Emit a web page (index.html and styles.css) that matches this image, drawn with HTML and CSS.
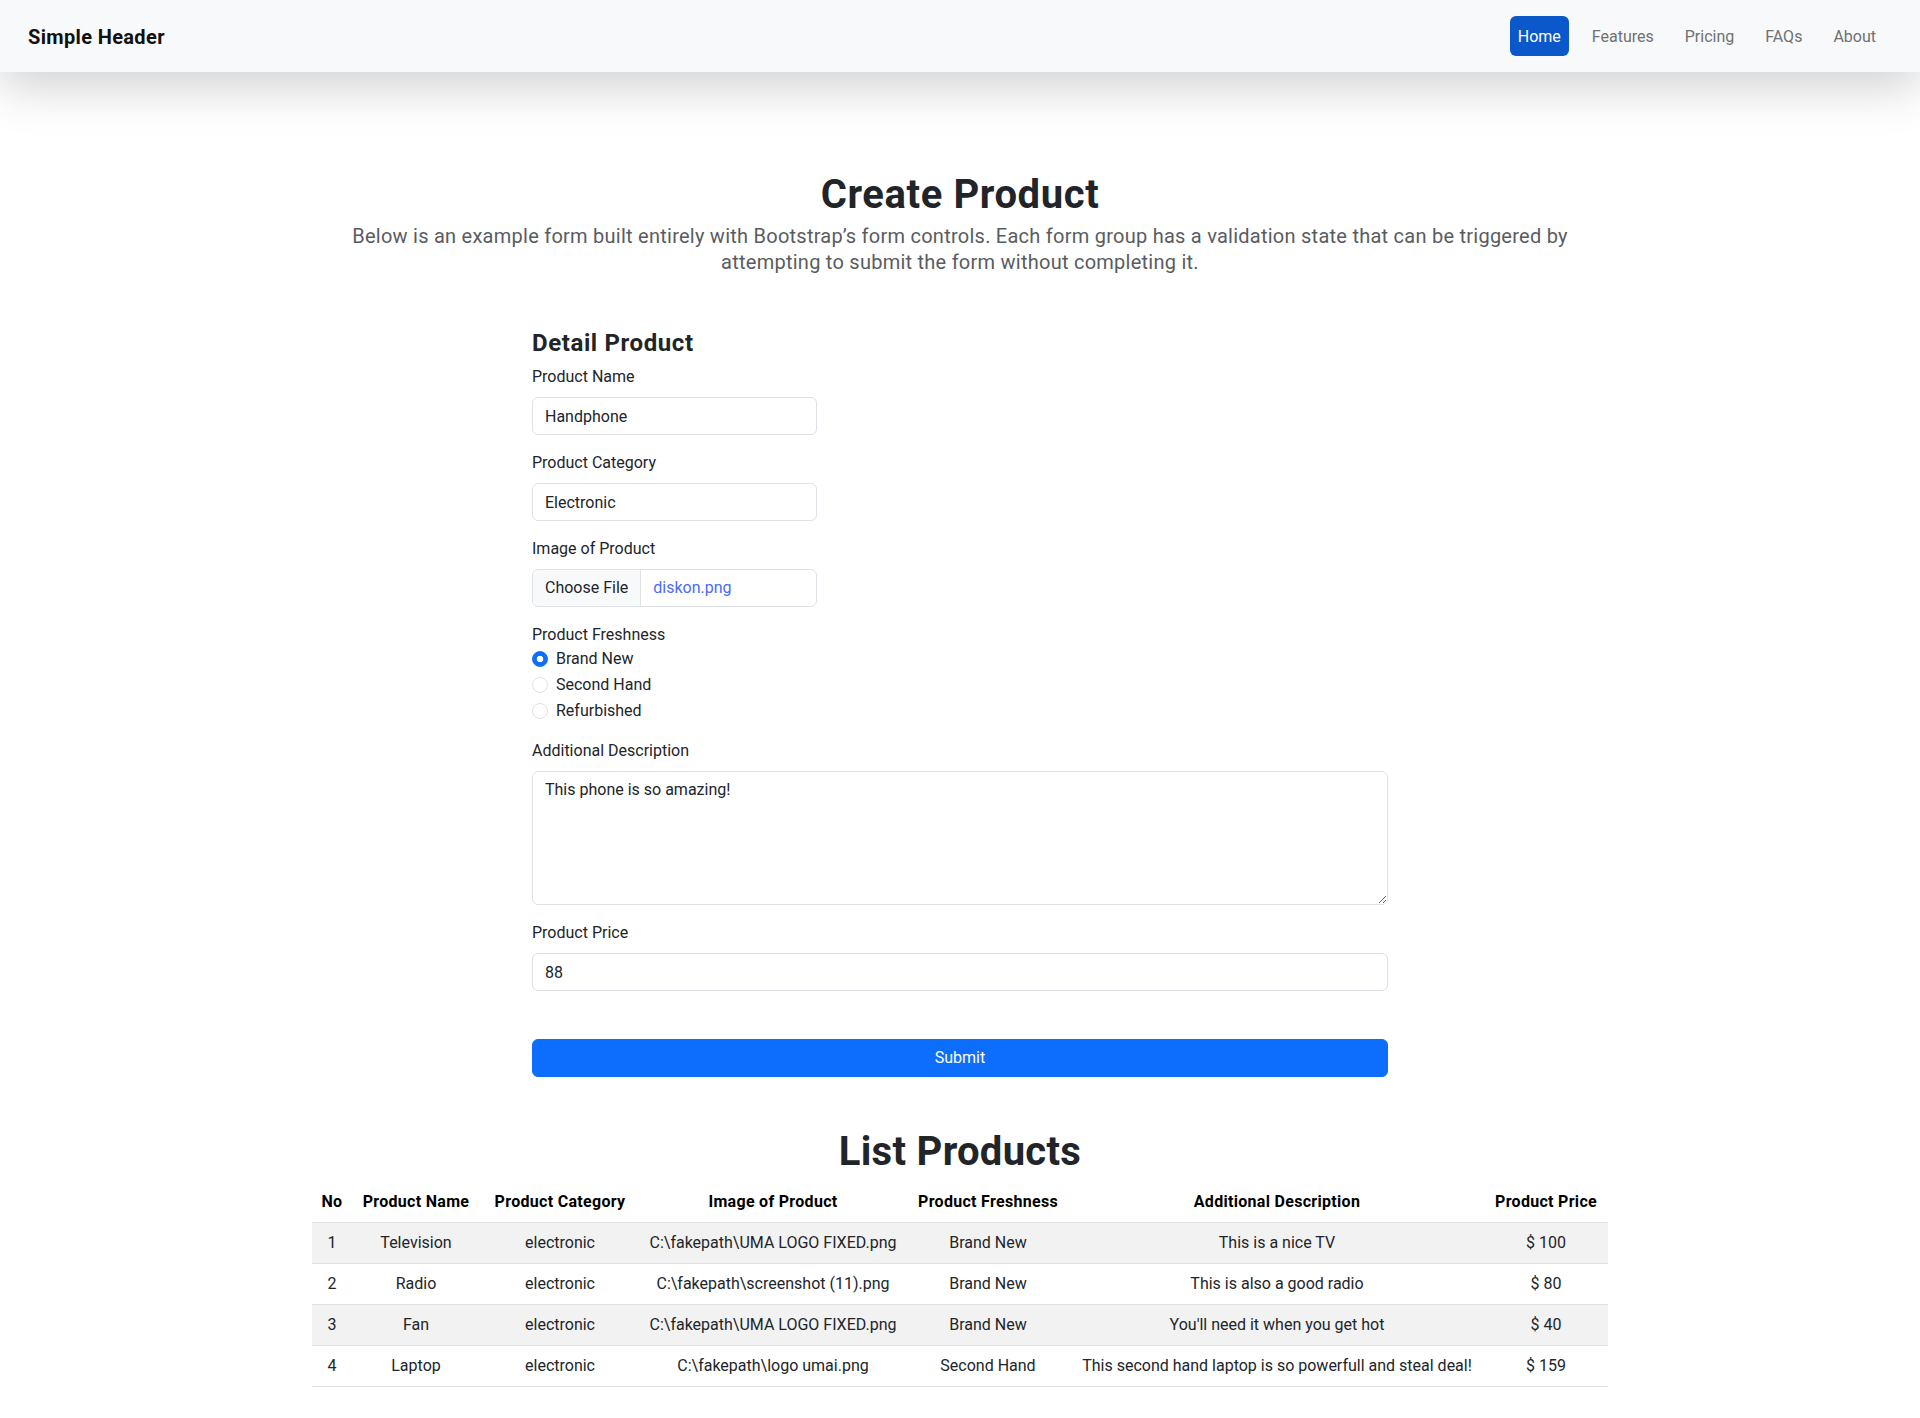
FILE: index.html
```html
<!DOCTYPE html>
<html lang="en">
<head>
<meta charset="utf-8">
<title>Create Product</title>
<link rel="stylesheet" href="styles.css">
</head>
<body>
<header class="site-header">
  <a class="brand" href="#">Simple Header</a>
  <nav class="nav">
    <a class="nav-link active" href="#">Home</a>
    <a class="nav-link" href="#">Features</a>
    <a class="nav-link" href="#">Pricing</a>
    <a class="nav-link" href="#">FAQs</a>
    <a class="nav-link" href="#">About</a>
  </nav>
</header>

<main class="container">
  <section class="hero">
    <h1 class="title">Create Product</h1>
    <p class="lead">Below is an example form built entirely with Bootstrap’s form controls. Each form group has a validation state that can be triggered by attempting to submit the form without completing it.</p>
  </section>

  <form class="product-form">
    <h4 class="form-title">Detail Product</h4>

    <div class="group">
      <label class="form-label">Product Name</label>
      <input class="form-control short" type="text" value="Handphone">
    </div>

    <div class="group">
      <label class="form-label">Product Category</label>
      <input class="form-control short" type="text" value="Electronic">
    </div>

    <div class="group">
      <label class="form-label">Image of Product</label>
      <div class="file-control short">
        <span class="file-btn">Choose File</span>
        <span class="file-name">diskon.png</span>
      </div>
    </div>

    <div class="group">
      <label class="plain-label">Product Freshness</label>
      <div class="form-check">
        <input class="radio" type="radio" name="fresh" checked>
        <span>Brand New</span>
      </div>
      <div class="form-check">
        <input class="radio" type="radio" name="fresh">
        <span>Second Hand</span>
      </div>
      <div class="form-check">
        <input class="radio" type="radio" name="fresh">
        <span>Refurbished</span>
      </div>
    </div>

    <div class="group">
      <label class="form-label">Additional Description</label>
      <textarea class="form-control textarea">This phone is so amazing!</textarea>
    </div>

    <div class="group">
      <label class="form-label">Product Price</label>
      <input class="form-control" type="text" value="88">
    </div>

    <button class="btn-submit" type="button">Submit</button>
  </form>

  <h1 class="title list-title">List Products</h1>
  <table class="table">
    <colgroup>
      <col style="width:40px">
      <col style="width:128px">
      <col style="width:160px">
      <col style="width:266px">
      <col style="width:164px">
      <col style="width:414px">
      <col style="width:124px">
    </colgroup>
    <thead>
      <tr>
        <th>No</th>
        <th>Product Name</th>
        <th>Product Category</th>
        <th>Image of Product</th>
        <th>Product Freshness</th>
        <th>Additional Description</th>
        <th>Product Price</th>
      </tr>
    </thead>
    <tbody>
      <tr class="striped">
        <td>1</td><td>Television</td><td>electronic</td><td>C:\fakepath\UMA LOGO FIXED.png</td><td>Brand New</td><td>This is a nice TV</td><td>$ 100</td>
      </tr>
      <tr>
        <td>2</td><td>Radio</td><td>electronic</td><td>C:\fakepath\screenshot (11).png</td><td>Brand New</td><td>This is also a good radio</td><td>$ 80</td>
      </tr>
      <tr class="striped">
        <td>3</td><td>Fan</td><td>electronic</td><td>C:\fakepath\UMA LOGO FIXED.png</td><td>Brand New</td><td>You'll need it when you get hot</td><td>$ 40</td>
      </tr>
      <tr>
        <td>4</td><td>Laptop</td><td>electronic</td><td>C:\fakepath\logo umai.png</td><td>Second Hand</td><td>This second hand laptop is so powerfull and steal deal!</td><td>$ 159</td>
      </tr>
    </tbody>
  </table>
</main>
</body>
</html>
```

FILE: styles.css
```css
* { box-sizing: border-box; }

html, body {
  margin: 0;
  background: #fff;
}

body {
  font-family: Roboto, "Segoe UI", "Noto Sans", Arial, sans-serif;
  font-size: 16px;
  line-height: 1.5;
  color: #212529;
}

/* Header */
.site-header {
  position: relative;
  z-index: 2;
  height: 72px;
  background: #f8f9fa;
  box-shadow: 0 16px 48px rgba(0, 0, 0, 0.175);
  display: flex;
  align-items: center;
  justify-content: space-between;
  padding: 0 36px 0 28px;
}

.brand {
  font-size: 20px;
  font-weight: 700;
  letter-spacing: 0.35px;
  color: #111;
  text-decoration: none;
  line-height: 30px;
  padding-top: 2px;
}

.nav {
  display: flex;
  gap: 15px;
}

.nav-link {
  display: block;
  padding: 9px 8px 7px;
  line-height: 24px;
  font-size: 16px;
  color: #6f7173;
  text-decoration: none;
  border-radius: 6px;
}

.nav-link.active {
  background: #0a58ca;
  color: #fff;
}

/* Main */
.container {
  width: 1296px;
  margin: 0 auto;
  padding-bottom: 40px;
}

.hero {
  padding-top: 99px;
  text-align: center;
}

.title {
  margin: 0;
  font-size: 40px;
  line-height: 48px;
  font-weight: 700;
  letter-spacing: 0.6px;
  color: #212529;
  text-align: center;
}

.lead {
  max-width: 1260px;
  margin: 4px auto 0;
  font-size: 20px;
  line-height: 26px;
  letter-spacing: 0.25px;
  color: #595c5f;
}

/* Form */
.product-form {
  width: 856px;
  margin: 54px 0 0 220px;
}

.form-title {
  margin: 0 0 8px;
  font-size: 24px;
  line-height: 28px;
  font-weight: 700;
  letter-spacing: 0.6px;
}

.group {
  margin-bottom: 16px;
}

.form-label {
  display: block;
  margin-bottom: 8px;
  line-height: 24px;
}

.plain-label {
  display: block;
  line-height: 24px;
}

.form-control {
  display: block;
  width: 100%;
  height: 38px;
  padding: 6px 12px;
  font: inherit;
  font-size: 16px;
  line-height: 24px;
  color: #212529;
  background: #fff;
  border: 1px solid #dee2e6;
  border-radius: 6px;
  outline: none;
}

.short {
  width: 285px;
}

.textarea {
  height: 134px;
  resize: vertical;
}

.file-control {
  display: flex;
  height: 38px;
  border: 1px solid #dee2e6;
  border-radius: 6px;
  overflow: hidden;
  background: #fff;
}

.file-btn {
  padding: 6px 12px;
  line-height: 24px;
  background: #f8f9fa;
  border-right: 1px solid #dee2e6;
  color: #212529;
}

.file-name {
  padding: 6px 12px;
  line-height: 24px;
  color: #4a6cf6;
}

.form-check {
  display: flex;
  align-items: flex-start;
  min-height: 24px;
  padding-left: 24px;
  margin-bottom: 2px;
  line-height: 24px;
}

.radio {
  appearance: none;
  -webkit-appearance: none;
  flex: none;
  width: 16px;
  height: 16px;
  margin: 4px 8px 0 -24px;
  border: 1px solid #dee2e6;
  border-radius: 50%;
  background: #fff;
}

.radio:checked {
  border-color: #0d6efd;
  background: radial-gradient(circle, #fff 0 3px, #0d6efd 3.6px);
}

.btn-submit {
  display: block;
  width: 100%;
  height: 38px;
  margin-top: 48px;
  padding: 6px 12px;
  font: inherit;
  font-size: 16px;
  line-height: 24px;
  color: #fff;
  background: #0d6efd;
  border: 1px solid #0d6efd;
  border-radius: 6px;
}

/* List */
.list-title {
  margin: 51px 0 6px;
  letter-spacing: 0.3px;
}

.table {
  width: 100%;
  table-layout: fixed;
  border-collapse: collapse;
}

.table th,
.table td {
  padding: 8px;
  line-height: 24px;
  text-align: center;
  border-bottom: 1px solid #dee2e6;
  white-space: nowrap;
}

.table th {
  font-weight: 700;
  letter-spacing: 0.3px;
  color: #000;
}

.table tr.striped td {
  background: #f2f2f2;
}
```
